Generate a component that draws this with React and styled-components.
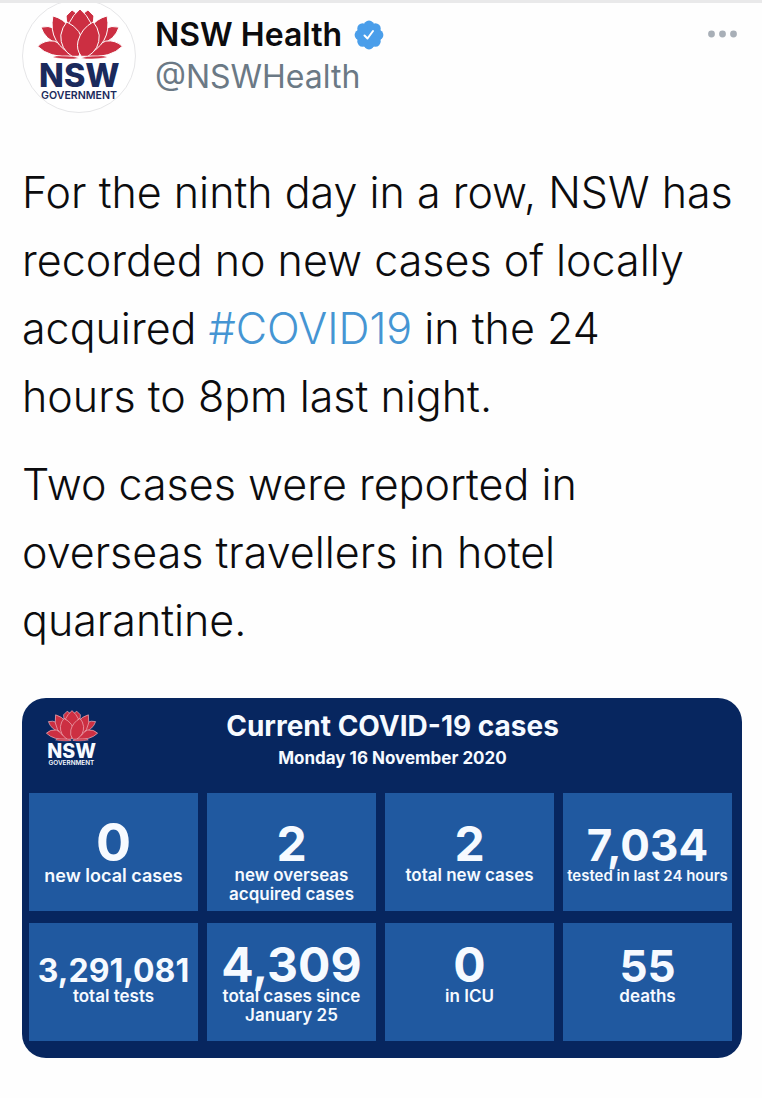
import React from "react";
import styled, { createGlobalStyle } from "styled-components";

const GlobalStyle = createGlobalStyle`
  * {
    box-sizing: border-box;
  }

  body {
    margin: 0;
    background: #fefefe;
    color: #0c0c0e;
    font-family: Inter, "Liberation Sans", sans-serif;
  }
`;

const Tweet = styled.article`
  width: 100%;
  border-top: 3px solid #e9e9ea;
  padding: 0 20px 40px 22px;
`;

const TweetHeader = styled.header`
  display: flex;
  align-items: flex-start;
  gap: 19px;
  height: 112px;
  overflow: hidden;
`;

const Avatar = styled.div`
  flex: none;
  width: 114px;
  height: 114px;
  margin-top: -4px;
  border: 1px solid #e6e6e8;
  border-radius: 50%;
  background: #ffffff;
  display: flex;
  align-items: flex-start;
  justify-content: center;
  padding: 8px 0 0 2px;
`;

const Names = styled.div`
  flex: 1;
  padding-top: 11px;
  font-size: 32px;
  line-height: 42px;
`;

const NameRow = styled.div`
  display: flex;
  align-items: center;
  gap: 12px;
`;

const Name = styled.h1`
  margin: 0;
  font-size: 32px;
  line-height: 42px;
  font-weight: 600;
`;

const Handle = styled.a`
  color: #6b7985;
  text-decoration: none;
`;

const MoreBtn = styled.button.attrs(() => ({
  type: "button",
  "aria-label": "More",
}))`
  display: flex;
  margin-top: 21px;
  padding: 5px;
  border: none;
  background: none;
  cursor: pointer;
`;

const TweetText = styled.div`
  margin: 43px 0 44px;
  font-size: 43px;
  line-height: 68px;
  font-weight: 300;
`;

const Paragraph = styled.p`
  margin: 0 0 20px;
`;

const Hashtag = styled.a`
  color: #4595d3;
  text-decoration: none;
`;

const Card = styled.section`
  border-radius: 24px;
  background: #07265f;
  color: #f6faff;
  padding: 0 10px 17px 7px;
`;

const CardHeader = styled.div`
  display: flex;
  align-items: flex-start;
  height: 95px;
  padding: 12px 45px 0 17px;
`;

const CardTitles = styled.div`
  flex: 1;
  text-align: center;
`;

const CardTitle = styled.h2`
  margin: 0;
  font-size: 28px;
  line-height: 32px;
  font-weight: 700;
`;

const CardDate = styled.p`
  margin: 0;
  font-size: 17px;
  line-height: 32px;
  font-weight: 700;
`;

const StatGrid = styled.dl`
  margin: 0;
  display: grid;
  grid-template-columns: repeat(4, minmax(0, 1fr));
  grid-auto-rows: 118px;
  gap: 12px 9px;
`;

const Stat = styled.div`
  display: flex;
  flex-direction: column-reverse;
  justify-content: flex-end;
  padding-top: ${(props) => (props.$lower ? 20 : 29)}px;
  background: #2059a0;
  text-align: center;
`;

// the parent font size keeps every figure on the same baseline
const StatValue = styled.dd`
  margin: 0;
  font-size: 48px;
  line-height: 44px;
  font-weight: 700;
`;

const Figure = styled.span`
  font-size: ${(props) => props.$size}px;
  line-height: 30px;
`;

const StatLabel = styled.dt`
  font-size: ${(props) => props.$size}px;
  line-height: 19px;
  font-weight: 600;
  white-space: pre;
`;

const STATS = [
  { value: "0", label: "new local cases", size: 52, labelSize: 18 },
  { value: "2", label: "new overseas\nacquired cases", size: 48 },
  { value: "2", label: "total new cases", size: 48 },
  { value: "7,034", label: "tested in last 24 hours", size: 44, labelSize: 15 },
  { value: "3,291,081", label: "total tests", size: 32 },
  { value: "4,309", label: "total cases since\nJanuary 25", size: 48 },
  { value: "0", label: "in ICU", size: 48 },
  { value: "55", label: "deaths", size: 44 },
];

// left half of the waratah, drawn back to front and mirrored around x = 200
const PETALS = [
  "M160 72 L158 46 L176 28 L200 46 L190 90 Z",
  "M82 80 Q104 74 124 84 L138 132 Q94 118 82 80 Z",
  "M72 138 Q92 118 122 122 Q158 136 178 168 Q108 174 72 138 Z",
  "M118 46 Q150 54 170 82 L188 168 Q102 132 118 46 Z",
];

function NswLogo({ width, line, ink }) {
  const half = PETALS.map((d) => <path key={d} d={d} />);
  return (
    <svg
      width={width}
      viewBox="70 22 260 286"
      role="img"
      aria-label="NSW Government"
    >
      <g fill="#cc2f42" stroke={line} strokeWidth="3" strokeLinejoin="round">
        {half}
        <g transform="translate(400 0) scale(-1 1)">{half}</g>
        <path d="M200 25 Q222 44 232 66 L220 160 H180 L168 66 Q178 44 200 25 Z" />
        <path d="M160 64 Q208 88 208 132 Q206 154 196 168 H176 Q140 146 142 104 Q146 80 160 64 Z" />
        <path d="M240 64 Q254 80 258 104 Q260 146 224 168 H204 Q188 148 194 122 Q204 84 240 64 Z" />
        <path
          d="M118 172 Q124 164 146 167 Q184 166 196 174 Q170 180 118 172 Z M282 172 Q276 164 254 167 Q216 166 204 174 Q230 180 282 172 Z"
          strokeWidth="2"
        />
      </g>
      <g fill={ink} textAnchor="middle" fontFamily="Inter, sans-serif">
        <text x="198" y="262" fontSize="98" fontWeight="800">
          NSW
        </text>
        <text x="197" y="298" fontSize="32" fontWeight="600">
          GOVERNMENT
        </text>
      </g>
    </svg>
  );
}

function VerifiedBadge() {
  const lobes = [0, 45, 90, 135, 180, 225, 270, 315];
  return (
    <svg width="30" height="30" viewBox="0 0 30 30" role="img" aria-label="Verified">
      <g fill="#4a9eea">
        <circle cx="15" cy="15" r="12" />
        {lobes.map((angle) => (
          <circle
            key={angle}
            cx="15"
            cy="6"
            r="5.4"
            transform={`rotate(${angle} 15 15)`}
          />
        ))}
      </g>
      <path
        d="M10.5 15.5 L13.5 18.5 L19 11"
        fill="none"
        stroke="#ffffff"
        strokeWidth="2"
        strokeLinecap="round"
        strokeLinejoin="round"
      />
    </svg>
  );
}

export default function App() {
  return (
    <>
      <GlobalStyle />
      <Tweet>
        <TweetHeader>
          <Avatar>
            <NswLogo width={86} line="#ffffff" ink="#1b2a5c" />
          </Avatar>
          <Names>
            <NameRow>
              <Name>NSW Health</Name>
              <VerifiedBadge />
            </NameRow>
            <Handle href="#NSWHealth">@NSWHealth</Handle>
          </Names>
          <MoreBtn>
            <svg width="30" height="10" viewBox="0 0 30 10" fill="#a8afb7">
              <circle cx="4.5" cy="5" r="3.4" />
              <circle cx="15.5" cy="5" r="3.4" />
              <circle cx="26.5" cy="5" r="3.4" />
            </svg>
          </MoreBtn>
        </TweetHeader>

        <TweetText>
          <Paragraph>
            For the ninth day in a row, NSW has recorded no new cases of locally
            acquired <Hashtag href="#COVID19">#COVID19</Hashtag> in the 24
            <br />
            hours to 8pm last night.
          </Paragraph>
          <Paragraph>
            Two cases were reported in overseas travellers in hotel quarantine.
          </Paragraph>
        </TweetText>

        <Card>
          <CardHeader>
            <NswLogo width={52} line="#f3c9d2" ink="#f6faff" />
            <CardTitles>
              <CardTitle>Current COVID-19 cases</CardTitle>
              <CardDate>Monday 16 November 2020</CardDate>
            </CardTitles>
          </CardHeader>
          <StatGrid>
            {STATS.map((stat, i) => (
              <Stat key={stat.label} $lower={i > 3}>
                <StatLabel $size={stat.labelSize || 17}>{stat.label}</StatLabel>
                <StatValue>
                  <Figure $size={stat.size}>{stat.value}</Figure>
                </StatValue>
              </Stat>
            ))}
          </StatGrid>
        </Card>
      </Tweet>
    </>
  );
}
